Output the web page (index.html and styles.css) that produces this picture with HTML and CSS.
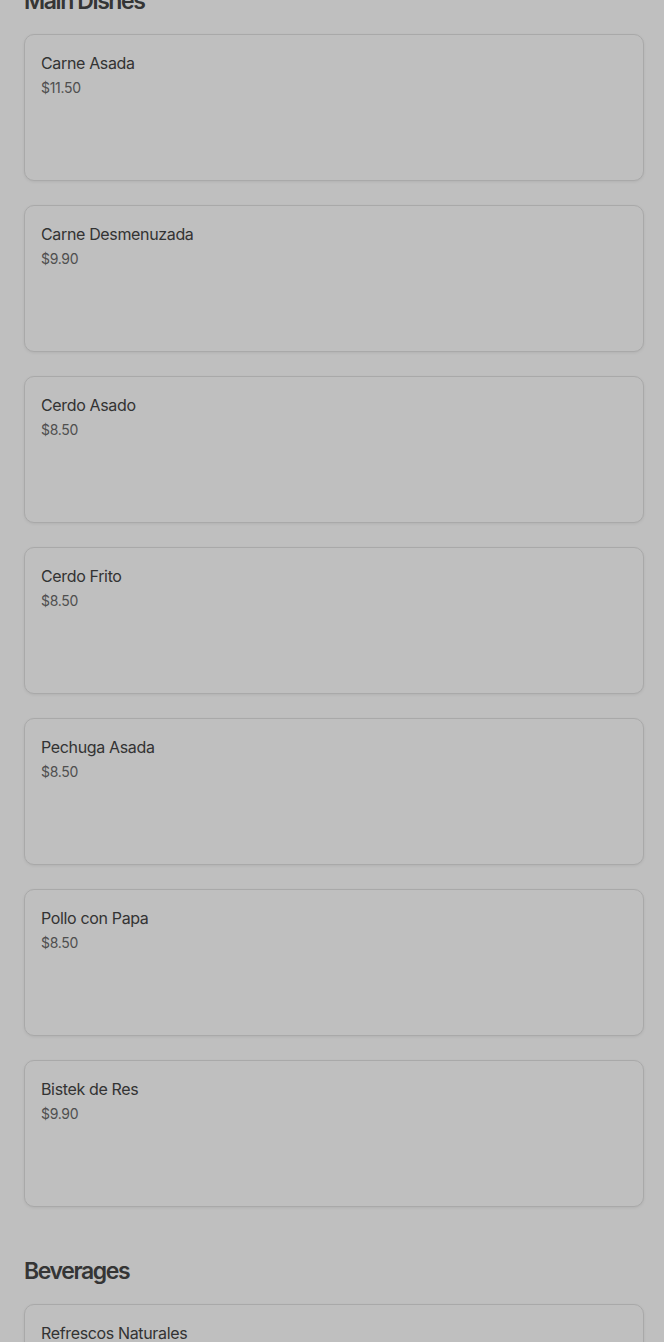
FILE: index.html
```html
<!DOCTYPE html>
<html lang="en">
<head>
    <meta charset="UTF-8">
    <meta name="viewport" content="width=device-width, initial-scale=1.0">
    <title>Menu</title>
    <link rel="stylesheet" href="styles.css">
</head>
<body>
    <main class="menu">
        <section class="category">
            <h2 class="category-title">Main Dishes</h2>
            <div class="items">
                <div class="item"><div class="item-name">Carne Asada</div><div class="item-price">$11.50</div></div>
                <div class="item"><div class="item-name">Carne Desmenuzada</div><div class="item-price">$9.90</div></div>
                <div class="item"><div class="item-name">Cerdo Asado</div><div class="item-price">$8.50</div></div>
                <div class="item"><div class="item-name">Cerdo Frito</div><div class="item-price">$8.50</div></div>
                <div class="item"><div class="item-name">Pechuga Asada</div><div class="item-price">$8.50</div></div>
                <div class="item"><div class="item-name">Pollo con Papa</div><div class="item-price">$8.50</div></div>
                <div class="item"><div class="item-name">Bistek de Res</div><div class="item-price">$9.90</div></div>
            </div>
        </section>
        <section class="category">
            <h2 class="category-title">Beverages</h2>
            <div class="items">
                <div class="item"><div class="item-name">Refrescos Naturales</div><div class="item-price">$2.00</div></div>
                <div class="item"><div class="item-name">Horchata</div><div class="item-price">$2.00</div></div>
            </div>
        </section>
    </main>
    <div class="backdrop"></div>
</body>
</html>
```

FILE: styles.css
```css
body {
    font-family: Inter, "Noto Sans", sans-serif;
    margin: 0;
    padding: 0;
    background-color: #ffffff;
    color: #404040;
}

.menu {
    margin-top: -15px;
    padding: 0 20px 24px 24px;
    display: flex;
    flex-direction: column;
    gap: 48px;
}

.category-title {
    font-size: 23px;
    line-height: 32px;
    font-weight: 600;
    letter-spacing: -1.4px;
    color: #474747;
    margin: 0 0 17px 0;
}

.items {
    display: flex;
    flex-direction: column;
    gap: 24px;
}

.item {
    box-sizing: border-box;
    height: 147px;
    padding: 16px;
    background-color: #ffffff;
    border: 1px solid #e2e2e2;
    border-radius: 10px;
    box-shadow: 0 1px 3px rgba(0, 0, 0, 0.08);
}

.item-name {
    font-size: 16px;
    line-height: 24px;
    font-weight: 400;
    letter-spacing: -0.35px;
    color: #454545;
}

.item-price {
    margin-top: 3px;
    font-size: 14px;
    line-height: 20px;
    letter-spacing: -0.3px;
    color: #6a6a6a;
}

/* dimmed page behind an open panel */
.backdrop {
    position: fixed;
    inset: 0;
    background-color: rgba(0, 0, 0, 0.25);
}
```
